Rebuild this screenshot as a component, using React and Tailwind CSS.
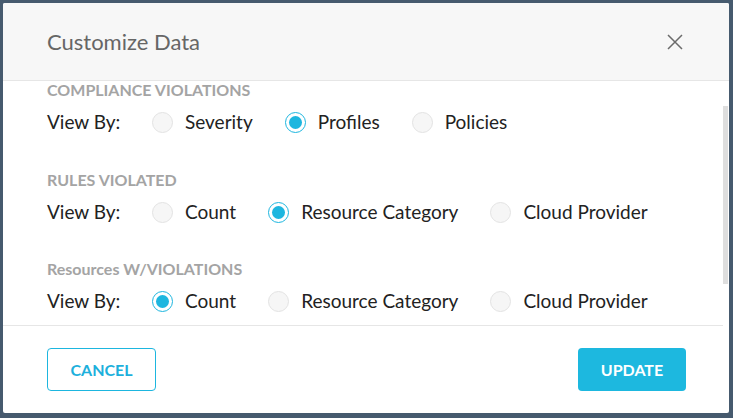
import React from "react";

const sections = [
  { title: "COMPLIANCE VIOLATIONS", options: ["Severity", "Profiles", "Policies"], selected: 1 },
  { title: "RULES VIOLATED", options: ["Count", "Resource Category", "Cloud Provider"], selected: 1 },
  { title: "Resources W/VIOLATIONS", options: ["Count", "Resource Category", "Cloud Provider"], selected: 0 },
];

function Radio({ checked }) {
  return checked ? (
    <span className="w-[21px] h-[21px] rounded-full border-[1.5px] border-[#1db6df] bg-white flex items-center justify-center shrink-0">
      <span className="w-[13px] h-[13px] rounded-full bg-[#1db6df]" />
    </span>
  ) : (
    <span className="w-[21px] h-[21px] rounded-full border border-[#e3e3e3] bg-[#f6f6f6] shrink-0" />
  );
}

export default function App() {
  return (
    <div
      className="w-[733px] h-[418px] bg-[#465a6e] pt-[3px] pl-[3px] overflow-hidden"
      style={{ fontFamily: "Lato, 'Open Sans', sans-serif" }}
    >
      <div className="w-[726px] h-[410px] bg-white flex flex-col rounded-[2px] overflow-hidden">
        {/* Header */}
        <div className="h-[78px] shrink-0 bg-[#f7f7f7] border-b border-[#e6e6e6] flex items-center justify-between pl-[44px] pr-[46px]">
          <span className="text-[22px] text-[#666666] leading-none pt-[1px]">Customize Data</span>
          <svg width="16" height="16" viewBox="0 0 16 16" className="mt-[1px]">
            <path d="M1 1 L15 15 M15 1 L1 15" stroke="#6b6b6b" strokeWidth="1.5" fill="none" />
          </svg>
        </div>
        {/* Body */}
        <div className="h-[245px] shrink-0 flex">
          <div className="w-[720px] border-b border-[#e6e6e6] pl-[44px] flex flex-col">
            {sections.map((s, i) => (
              <div key={i} className={i === 0 ? "" : i === 1 ? "mt-[37px]" : "mt-[36px]"}>
                <div className="h-[18px] leading-[18px] text-[16px] font-bold text-[#a4a4a4]">{s.title}</div>
                <div className="mt-[11px] h-[24px] flex items-center text-[19px] text-[#222222]">
                  <span className="w-[105px] shrink-0">View By:</span>
                  {s.options.map((o, j) => (
                    <div key={j} className="flex items-center gap-[12px] mr-[32px]">
                      <Radio checked={j === s.selected} />
                      <span>{o}</span>
                    </div>
                  ))}
                </div>
              </div>
            ))}
          </div>
          <div className="w-[6px] pt-[25px]">
            <div className="h-[178px] w-[5px] bg-[#dedede]" />
          </div>
        </div>
        {/* Footer */}
        <div className="flex-1 flex items-start justify-between pl-[44px] pr-[43px] pt-[22px]">
          <button className="w-[109px] h-[43px] rounded-[4px] border border-[#1db6df] text-[#1db0dc] text-[16px] font-bold bg-white">
            CANCEL
          </button>
          <button className="w-[108px] h-[43px] rounded-[4px] bg-[#1db8df] text-white text-[16px] font-bold">
            UPDATE
          </button>
        </div>
      </div>
    </div>
  );
}
